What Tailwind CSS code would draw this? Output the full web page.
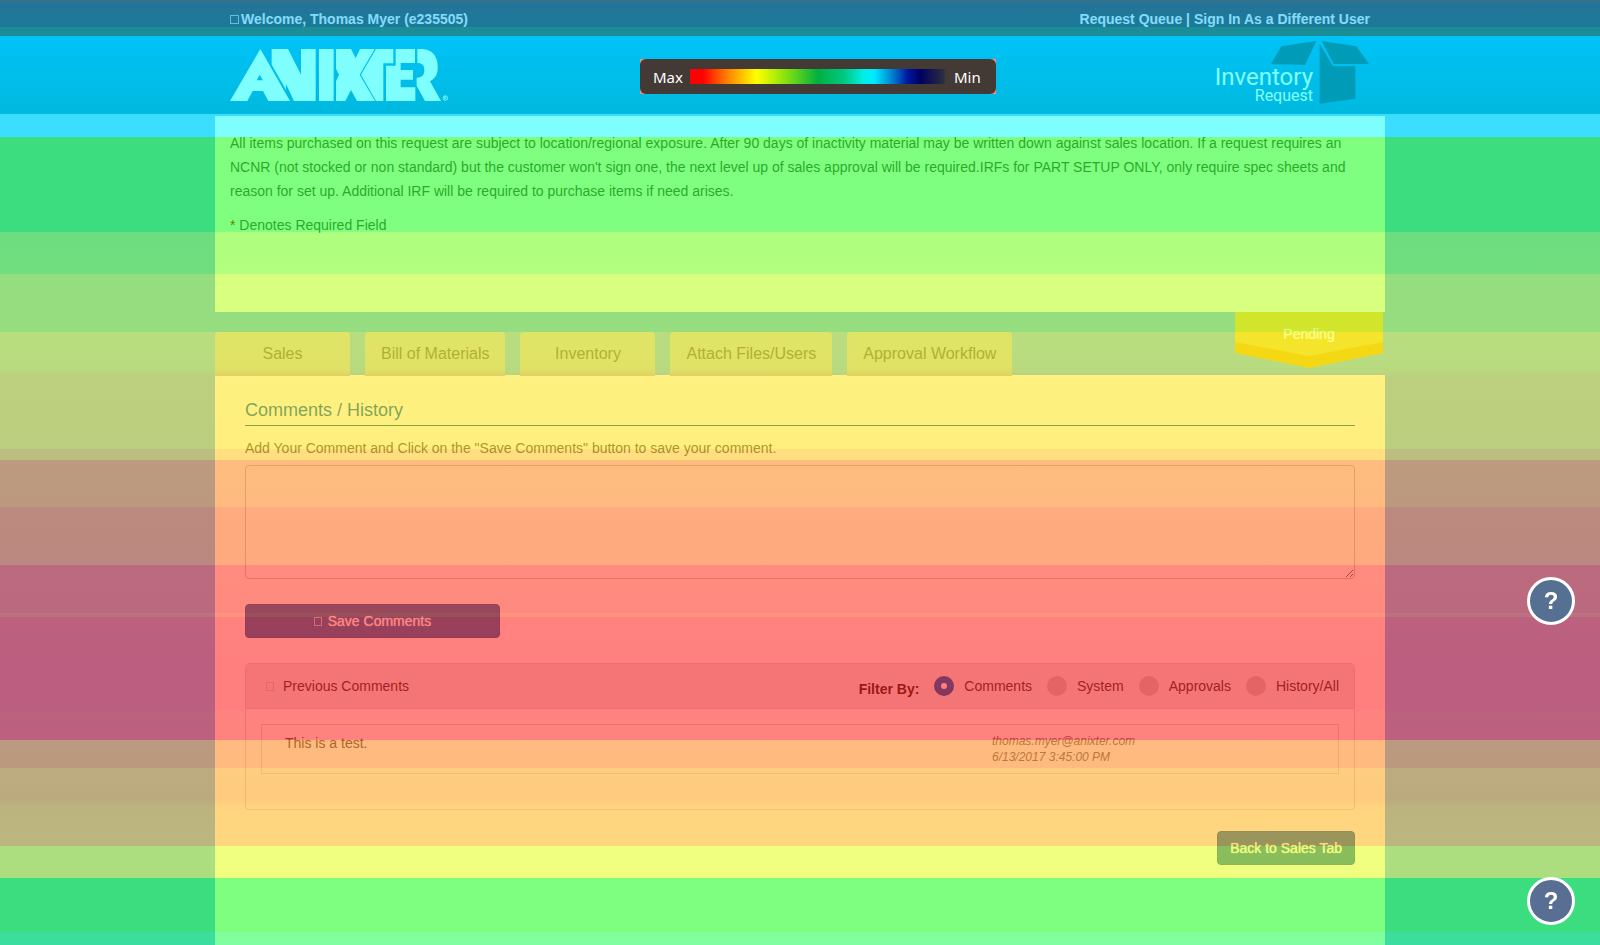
<!DOCTYPE html>
<html lang="en">
<head>
<meta charset="utf-8">
<meta name="viewport" content="width=device-width, initial-scale=1">
<title>Inventory Request</title>
<script src="https://cdn.jsdelivr.net/npm/@tailwindcss/browser@4"></script>
</head>
<body class="flex min-h-screen flex-col bg-[#78bdff] font-['Liberation_Sans',Arial,sans-serif] text-sm text-[#555]">

<!-- Account bar -->
<div class="bg-linear-to-b from-[#3a3a3a] to-[#363636]">
  <div class="mx-auto flex h-9 max-w-[1170px] items-center justify-between px-[15px] pt-0.5 text-sm font-bold text-white">
    <span class="flex items-center"><span class="mr-0.5 h-[9px] w-[9px] border border-white/70"></span>Welcome, Thomas Myer (e235505)</span>
    <nav><a href="#">Request Queue</a> | <a href="#">Sign In As a Different User</a></nav>
  </div>
</div>

<!-- Brand header -->
<header class="bg-linear-to-b from-[#0087f0] to-[#0073c0]">
  <div class="mx-auto flex h-[78px] max-w-[1170px] items-start justify-between px-[15px]">
    <a href="#" aria-label="Anixter" class="pt-[13px]">
      <svg width="218" height="53" viewBox="12 15 654 159" fill="#fff" fill-rule="evenodd">
        <path d="M12 171 103 15 192 171H127L111 141H80L64 171ZM92 109H111L101 92Z"/>
        <path d="M137 15H186L225 92V15H269V171H204L180 120V137L137 62Z"/>
        <path d="M279 15H323V171H279Z"/>
        <path d="M330 15H375L389 43 402 15H446L401 92 447 171H393L375 138 358 171H330V112L339 92 330 74Z"/>
        <path d="M450 15H502V58H472V171H450L405 92Z"/>
        <path d="M509 15H567V57H524V78H561V107H524V130H568V171H480V65H509Z"/>
        <path d="M574 15H590C625 17 637 45 635 75 634 95 625 104 612 112L645 171H597L572 125V101C589 101 595 92 595 79 595 63 589 57 574 57Z"/>
        <g fill="none" stroke="#fff" stroke-width="2"><circle cx="658" cy="162" r="7"/><path d="M655 167V158H660V162H655M658 162 661 167"/></g>
      </svg>
    </a>
    <div class="flex">
      <div class="pt-[29px] text-right font-[Roboto,sans-serif] text-white">
        <div class="text-2xl leading-6">Inventory</div>
        <div class="text-base leading-[14px]">Request</div>
      </div>
      <svg class="-ml-[42px] mt-[5px]" width="99" height="63" viewBox="694 122 297 189" fill="#003870">
        <path d="M725 138 830 122 796 194 694 191ZM846 122 950 138 988 191H882ZM840 130 880 198H947V295L840 310Z"/>
      </svg>
    </div>
  </div>
</header>

<main class="mx-auto flex w-full max-w-[1170px] flex-1 flex-col pt-0.5">
  <section class="h-[196px] bg-white px-[15px] pt-[15px] leading-6">
    <p>All items purchased on this request are subject to location/regional exposure. After 90 days of inactivity material may be written down against sales location. If a request requires an NCNR (not stocked or non standard) but the customer won't sign one, the next level up of sales approval will be required.IRFs for PART SETUP ONLY, only require spec sheets and reason for set up. Additional IRF will be required to purchase items if need arises.</p>
    <p class="mt-2.5"><span class="text-[#d00000]">*</span> Denotes Required Field</p>
  </section>

  <div class="flex items-start justify-between pr-0.5 shadow-[inset_0_-1px_#ffffff]">
    <nav class="flex gap-[15px] pt-5 text-base text-[#666]">
      <a href="#" class="flex h-11 min-w-[135px] items-center justify-center rounded-t bg-linear-to-b from-[#c8cacc] from-80% to-[#c0c0c4] px-4">Sales</a>
      <a href="#" class="flex h-11 min-w-[135px] items-center justify-center rounded-t bg-linear-to-b from-[#c8cacc] from-80% to-[#c0c0c4] px-4">Bill of Materials</a>
      <a href="#" class="flex h-11 min-w-[135px] items-center justify-center rounded-t bg-linear-to-b from-[#c8cacc] from-80% to-[#c0c0c4] px-4">Inventory</a>
      <a href="#" class="flex h-11 min-w-[135px] items-center justify-center rounded-t bg-linear-to-b from-[#c8cacc] from-80% to-[#c0c0c4] px-4">Attach Files/Users</a>
      <a href="#" class="flex h-11 min-w-[135px] items-center justify-center rounded-t bg-linear-to-b from-[#c8cacc] from-80% to-[#c0c0c4] px-4">Approval Workflow</a>
    </nav>
    <div class="h-14 w-[148px] bg-[#f2b528] [clip-path:polygon(0_0,100%_0,100%_73%,50%_100%,0_73%)]">
      <div class="h-11 bg-[#f0cd58] pt-3 text-center leading-5 text-white [clip-path:polygon(0_0,100%_0,100%_68%,50%_100%,0_68%)] text-shadow-[0_0_1px_#ffffff]">Pending</div>
    </div>
  </div>

  <section class="flex-1 bg-white px-[30px] pt-[22px]">
    <h1 class="border-b border-[#0a6a80] pb-[3px] text-lg leading-6 text-[#0069b5]">Comments / History</h1>
    <label for="comment" class="mt-3 block leading-5">Add Your Comment and Click on the "Save Comments" button to save your comment.</label>
    <textarea id="comment" class="mt-[7px] block h-[114px] w-full rounded border border-[#c8c8c8] bg-transparent p-2 outline-none"></textarea>
    <button class="mt-[25px] flex h-[34px] w-[255px] items-center justify-center gap-1.5 rounded border border-[#2e6da4] bg-[#337ab7] text-white text-shadow-[0_0_1px_#ffffff]"><span class="h-[9px] w-2 border border-white/60"></span>Save Comments</button>

    <section class="mt-[25px] h-[147px] rounded border border-[#ddd]">
      <div class="flex h-[45px] items-center justify-between border-b border-[#ddd] bg-[#ebebed] pr-[15px] pl-5 text-[#444]">
        <h2 class="flex items-center gap-[9px]"><span class="h-[9px] w-2 border border-[#ccc]"></span>Previous Comments</h2>
        <div class="flex items-center gap-[15px]" role="radiogroup" aria-labelledby="filter">
          <span id="filter" class="pt-1.5 font-bold text-[#333]">Filter By:</span>
          <label class="flex items-center gap-2.5"><input type="radio" name="filter" checked class="h-5 w-5 appearance-none rounded-full bg-[#d0d0d4] checked:border-[7px] checked:border-[#0a6fbe] checked:bg-white">Comments</label>
          <label class="flex items-center gap-2.5"><input type="radio" name="filter" class="h-5 w-5 appearance-none rounded-full bg-[#c8c8cc] checked:border-[7px] checked:border-[#0a6fbe] checked:bg-white">System</label>
          <label class="flex items-center gap-2.5"><input type="radio" name="filter" class="h-5 w-5 appearance-none rounded-full bg-[#c8c8cc] checked:border-[7px] checked:border-[#0a6fbe] checked:bg-white">Approvals</label>
          <label class="flex items-center gap-2.5"><input type="radio" name="filter" class="h-5 w-5 appearance-none rounded-full bg-[#c8c8cc] checked:border-[7px] checked:border-[#0a6fbe] checked:bg-white">History/All</label>
        </div>
      </div>
      <article class="m-[15px] flex h-[50px] border border-[#ddd] pt-2 pl-[23px]">
        <p class="mr-[5px] w-2/3 leading-5">This is a test.</p>
        <p class="text-xs leading-4 text-[#777] italic">thomas.myer@anixter.com<br>6/13/2017 3:45:00 PM</p>
      </article>
    </section>

    <div class="mt-[21px] flex justify-end">
      <button class="h-[34px] rounded border border-[#2e6da4] bg-[#337ab7] px-3 text-white text-shadow-[0_0_1px_#ffffff]">Back to Sales Tab</button>
    </div>
  </section>
</main>

<!-- Attention heatmap bands -->
<div class="pointer-events-none fixed inset-0 opacity-50 bg-[linear-gradient(to_bottom,#48a0c0_0px,#10b0f8_2px,#00bcfa_27px,#00e4f6_27px,#00e4f6_36px,#00ffff_36px,#00ffff_137px,#00ff00_137px,#00ff00_232px,#60ff00_232px,#68ff00_274px,#b2ff00_274px,#b4ff00_332px,#f8ff00_332px,#f8fa00_368px,#ffe400_377px,#ffe000_449px,#ffc000_449px,#ffc000_460px,#ff7a00_460px,#ff7700_507px,#ff5800_507px,#ff5400_565px,#ff1a00_565px,#ff1600_613px,#ff2800_613px,#ff2600_617px,#ff0800_617px,#ff0000_655px,#ff0000_710px,#ff0800_712px,#ff0600_740px,#ff7800_740px,#ff7700_768px,#ff9d00_768px,#ff9800_800px,#ffac00_808px,#ffb000_846px,#e2ff00_846px,#e0ff00_878px,#00ff00_878px,#00ff00_931px,#00ff3c_933px,#00ff3c_945px)]"></div>

<!-- Heatmap legend -->
<div class="fixed top-[59px] left-[40%] bg-[#ff8578]">
  <div class="flex h-[35px] w-[356px] items-center rounded-md bg-[#433a36] pr-[15px] pl-[13px] font-['Noto_Sans',sans-serif] text-[15px] text-white">
    <span class="w-[37px] pt-0.5">Max</span>
    <span class="h-[15px] w-64 bg-[linear-gradient(to_right,#f00_0%,#f00_5%,#ff7a00_14%,#ffff00_26%,#80e010_38%,#00b040_50%,#00c880_60%,#00f0e8_68%,#00eaff_72%,#0080d0_79%,#0018a0_85%,#000060_90%,#2c2c40_99%,#433a36_100%)]"></span>
    <span class="pt-0.5 pl-2">Min</span>
  </div>
</div>

<!-- Floating help buttons -->
<div class="fixed right-[25px] bottom-5 flex flex-col gap-[252px]">
  <button aria-label="Help" class="flex h-12 w-12 items-center justify-center rounded-full border-3 border-white bg-[#567092] text-2xl font-bold text-white">?</button>
  <button aria-label="Help" class="flex h-12 w-12 items-center justify-center rounded-full border-3 border-white bg-[#586e92] text-2xl font-bold text-white">?</button>
</div>
</body>
</html>
